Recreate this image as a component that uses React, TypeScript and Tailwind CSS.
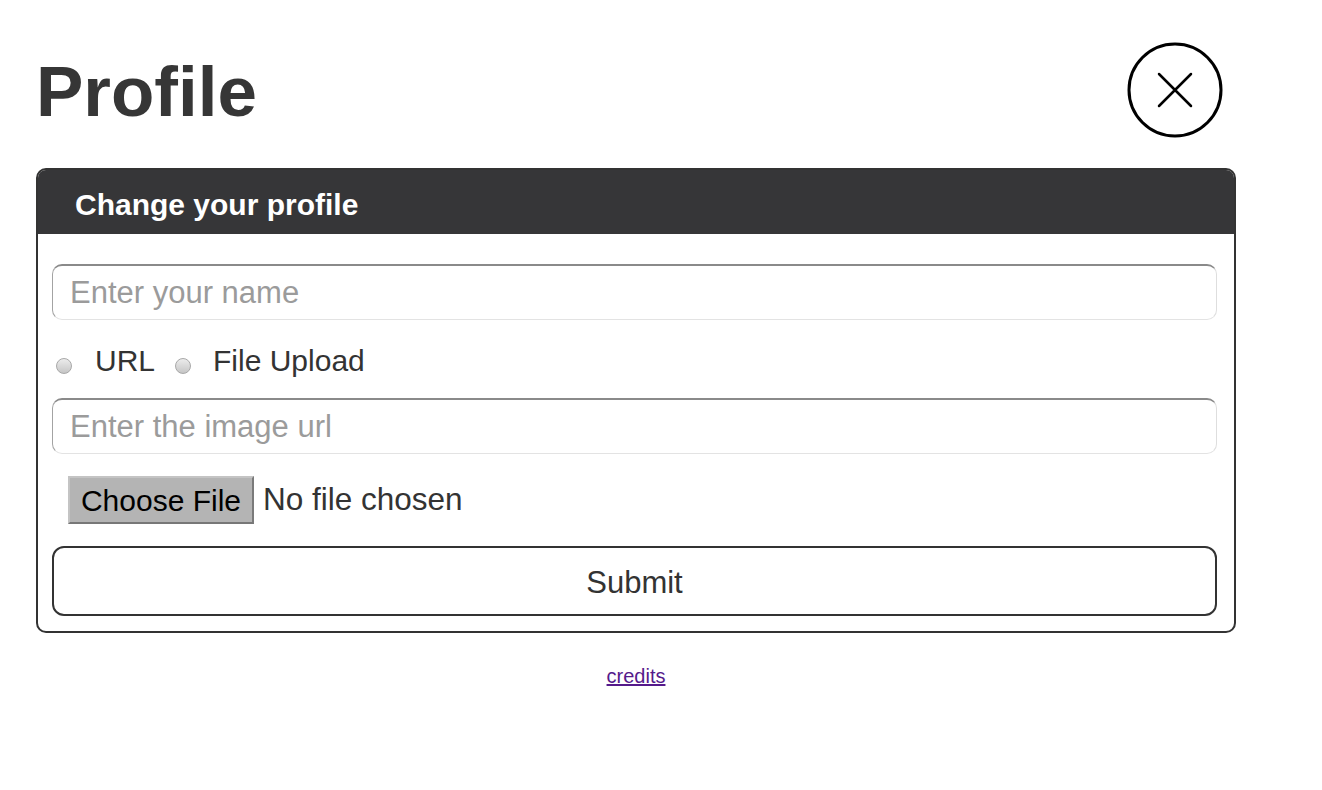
import { useState } from "react";

function CloseButton() {
  return (
    <button type="button" aria-label="Close" className="mr-[13px] h-[96px] w-[96px]">
      <svg viewBox="0 0 96 96" className="h-[96px] w-[96px]">
        <circle cx="48" cy="48" r="46" fill="none" stroke="#000" strokeWidth="3" />
        <path d="M32 32 L64 64 M64 32 L32 64" stroke="#000" strokeWidth="2.5" strokeLinecap="round" />
      </svg>
    </button>
  );
}

export default function App() {
  const [source, setSource] = useState<"url" | "file" | "">("");
  const [name, setName] = useState("");
  const [url, setUrl] = useState("");

  return (
    <div className="min-h-[790px] bg-white px-[36px] pt-[42px] font-['Liberation_Sans',Arial,sans-serif]">
      <div className="w-[1200px]">
        <div className="flex items-center justify-between">
          <h1 className="mb-[-2px] text-[71px] font-bold leading-none text-[#363636]">Profile</h1>
          <CloseButton />
        </div>

        <div className="mt-[30px] overflow-hidden rounded-[10px] border-2 border-[#333]">
          <div className="flex h-[64px] items-center bg-[#363638] pl-[37px] pt-[5px]">
            <h2 className="text-[30px] font-bold leading-[30px] text-white">Change your profile</h2>
          </div>

          <form
            className="flex flex-col pb-[15px] pl-[14px] pr-[17px] pt-[30px]"
            onSubmit={(e) => e.preventDefault()}
          >
            <input
              type="text"
              value={name}
              onChange={(e) => setName(e.target.value)}
              placeholder="Enter your name"
              className="h-[56px] rounded-[10px] border-x border-b border-t-2 border-b-[#e3e3e3] border-l-[#a3a3a3] border-r-[#dedede] border-t-[#8a8a8a] px-[17px] text-[31px] text-[#333] outline-none placeholder:text-[#9b9b9b]"
            />

            <div className="mt-[24px] flex h-[34px] items-start text-[30px] leading-[34px] text-[#333]">
              <input
                type="radio"
                name="source"
                checked={source === "url"}
                onChange={() => setSource("url")}
                className="ml-[4px] mt-[14px] h-[16px] w-[16px] appearance-none rounded-full border border-[#a8a8a8] bg-linear-to-b from-[#ececec] to-[#c6c6c6]"
              />
              <span className="ml-[23px]">URL</span>
              <input
                type="radio"
                name="source"
                checked={source === "file"}
                onChange={() => setSource("file")}
                className="ml-[20px] mt-[14px] h-[16px] w-[16px] appearance-none rounded-full border border-[#a8a8a8] bg-linear-to-b from-[#ececec] to-[#c6c6c6]"
              />
              <span className="ml-[22px]">File Upload</span>
            </div>

            <input
              type="text"
              value={url}
              onChange={(e) => setUrl(e.target.value)}
              placeholder="Enter the image url"
              className="mt-[20px] h-[56px] rounded-[10px] border-x border-b border-t-2 border-b-[#e3e3e3] border-l-[#a3a3a3] border-r-[#dedede] border-t-[#8a8a8a] px-[17px] text-[31px] text-[#333] outline-none placeholder:text-[#9b9b9b]"
            />

            <label className="ml-[16px] mt-[22px] flex h-[48px] items-center text-[31.5px]">
              <span className="flex h-[48px] w-[186px] items-center justify-center border-2 border-b-[#777] border-l-[#c4c4c4] border-r-[#7a7a7a] border-t-[#c4c4c4] bg-[#b4b4b4] text-[30px] text-black">
                Choose File
              </span>
              <span className="ml-[9px] text-[#333]">No file chosen</span>
              <input type="file" className="hidden" />
            </label>

            <button
              type="submit"
              className="mt-[22px] h-[70px] rounded-[12px] border-2 border-[#333] bg-white pt-[4px] text-[31px] text-[#333]"
            >
              Submit
            </button>
          </form>
        </div>

        <div className="mt-[32px] text-center">
          <a href="#" className="text-[20px] leading-[23px] text-[#551a8b] underline">
            credits
          </a>
        </div>
      </div>
    </div>
  );
}
